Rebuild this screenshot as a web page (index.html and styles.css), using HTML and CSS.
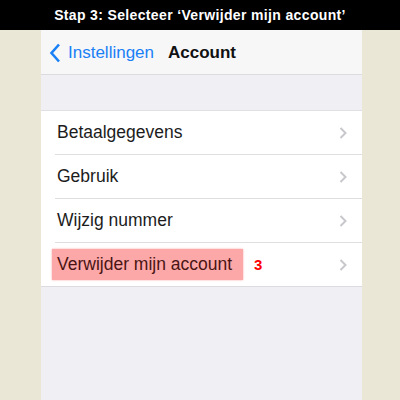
FILE: index.html
```html
<!doctype html>
<html lang="nl">
    <head>
        <meta charset="UTF-8" />
        <meta name="viewport" content="width=device-width, initial-scale=1.0" />
        <title>Stap 3 - Verwijder mijn account</title>
        <link rel="stylesheet" href="styles.css">
    </head>
    <body>
        <div class="caption">Stap 3: Selecteer ‘Verwijder mijn account’</div>

        <div class="phone">
            <div class="navbar">
                <span class="back">
                    <svg class="back-icon" viewBox="0 0 12 20">
                        <path d="M10 1.5 L2.5 10 L10 18.5"></path>
                    </svg>
                    Instellingen
                </span>
                <span class="title">Account</span>
            </div>

            <div class="list">
                <div class="row">
                    <span class="label">Betaalgegevens</span>
                    <svg class="chevron" viewBox="0 0 8 12"><path d="M1.5 1 L6.5 6 L1.5 11"></path></svg>
                </div>
                <div class="row">
                    <span class="label">Gebruik</span>
                    <svg class="chevron" viewBox="0 0 8 12"><path d="M1.5 1 L6.5 6 L1.5 11"></path></svg>
                </div>
                <div class="row">
                    <span class="label">Wijzig nummer</span>
                    <svg class="chevron" viewBox="0 0 8 12"><path d="M1.5 1 L6.5 6 L1.5 11"></path></svg>
                </div>
                <div class="row">
                    <span class="label marked">Verwijder mijn account</span>
                    <span class="step">3</span>
                    <svg class="chevron" viewBox="0 0 8 12"><path d="M1.5 1 L6.5 6 L1.5 11"></path></svg>
                </div>
            </div>
        </div>
    </body>
</html>
```

FILE: styles.css
```css
* {
    margin: 0;
    padding: 0;
    box-sizing: border-box;
}

body {
    width: 400px;
    height: 400px;
    overflow: hidden;
    background: #ebe7d6;
    font-family: "Liberation Sans", Arial, sans-serif;
}

.caption {
    height: 30px;
    background: #000;
    color: #fff;
    font-size: 14px;
    font-weight: bold;
    line-height: 31px;
    text-align: center;
    letter-spacing: 0.35px;
}

.phone {
    width: 321px;
    height: 370px;
    margin-left: 41px;
    background: #efeff4;
}

.navbar {
    height: 45px;
    background: #f7f7f8;
    border-bottom: 1px solid #dcdce0;
    display: flex;
    align-items: center;
    padding-left: 8px;
    padding-top: 2px;
}

.back {
    display: flex;
    align-items: center;
    color: #1a80f5;
    font-size: 17px;
}

.back-icon {
    width: 12px;
    height: 20px;
    margin-right: 7px;
    stroke: #1a80f5;
    stroke-width: 2.6;
    fill: none;
}

.title {
    margin-left: 14px;
    font-size: 17px;
    font-weight: bold;
    color: #111;
}

.list {
    margin-top: 35px;
    background: #fff;
    border-top: 1px solid #e0e0e4;
    border-bottom: 1px solid #dcdce0;
}

.row {
    height: 44px;
    display: flex;
    align-items: center;
    margin-left: 14px;
    padding-left: 2px;
    padding-right: 15px;
    border-bottom: 1px solid #dededf;
}

.row:last-child {
    border-bottom: none;
    height: 43px;
}

.label {
    font-size: 17.5px;
    color: #1c1c1c;
}

.marked {
    margin-left: -5px;
    padding: 5px 11px 5px 5px;
    background: #fca8a8;
    color: #4a1414;
    box-shadow: 0 0 2px #fca8a8;
}

.step {
    margin-left: 11px;
    color: #f00;
    font-size: 15px;
    font-weight: bold;
}

.chevron {
    margin-left: auto;
    width: 8px;
    height: 12px;
    stroke: #c7c7cc;
    stroke-width: 2;
    fill: none;
}
```
